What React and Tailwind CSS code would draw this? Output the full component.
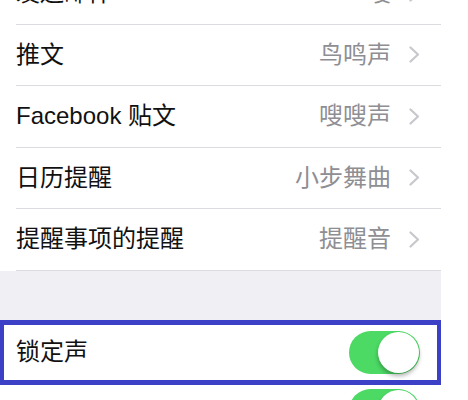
const FONT = { fontFamily: '"Liberation Sans", "Noto Sans CJK SC", sans-serif' };

const rows = [
  { label: "发送邮件", value: "嗖" },
  { label: "推文", value: "鸟鸣声" },
  { label: "Facebook 贴文", value: "嗖嗖声" },
  { label: "日历提醒", value: "小步舞曲" },
  { label: "提醒事项的提醒", value: "提醒音" },
];

const Chevron = () => (
  <svg width="11" height="17" viewBox="0 0 11 17" fill="none" className="shrink-0">
    <polyline points="1.5,1.5 9,8.5 1.5,15.5" stroke="#c7c7cc" strokeWidth="2.2" strokeLinecap="round" strokeLinejoin="round" />
  </svg>
);

const Toggle = () => (
  <div className="relative w-[71px] h-[43px] rounded-full bg-[#4cd964] shrink-0">
    <div className="absolute right-[1px] top-[1px] w-[41px] h-[41px] rounded-full bg-white shadow-[0_3px_4px_rgba(0,0,0,0.3)]" />
  </div>
);

export default function App() {
  return (
    <div className="w-[468px] h-[400px] overflow-hidden bg-white" style={FONT}>
      <div className="w-[441px] -mt-[37px]">
        {rows.map((r, i) => (
          <div key={i} className="pl-4">
            <div className="flex items-center h-[61.5px] pr-[21px] border-b border-[#dcdce0]">
              <span className="text-[24px] text-[#111]">{r.label}</span>
              <div className="ml-auto flex items-center gap-[18px]">
                <span className="text-[24px] text-[#8e8e93]">{r.value}</span>
                <Chevron />
              </div>
            </div>
          </div>
        ))}
        <div className="h-[49px] bg-[#efeff4]" />
        <div className="border-[4px] border-t-[5px] border-b-[5px] border-[#3c40c6] h-[65px] flex items-center pl-3 pr-[17px]">
          <span className="text-[24px] text-[#111]">锁定声</span>
          <div className="ml-auto">
            <Toggle />
          </div>
        </div>
        <div className="flex items-start h-[60px] pt-[4px] pl-4 pr-[21px]">
          <span className="text-[24px] text-[#111] mt-[12px]">按键音</span>
          <div className="ml-auto">
            <Toggle />
          </div>
        </div>
      </div>
    </div>
  );
}
